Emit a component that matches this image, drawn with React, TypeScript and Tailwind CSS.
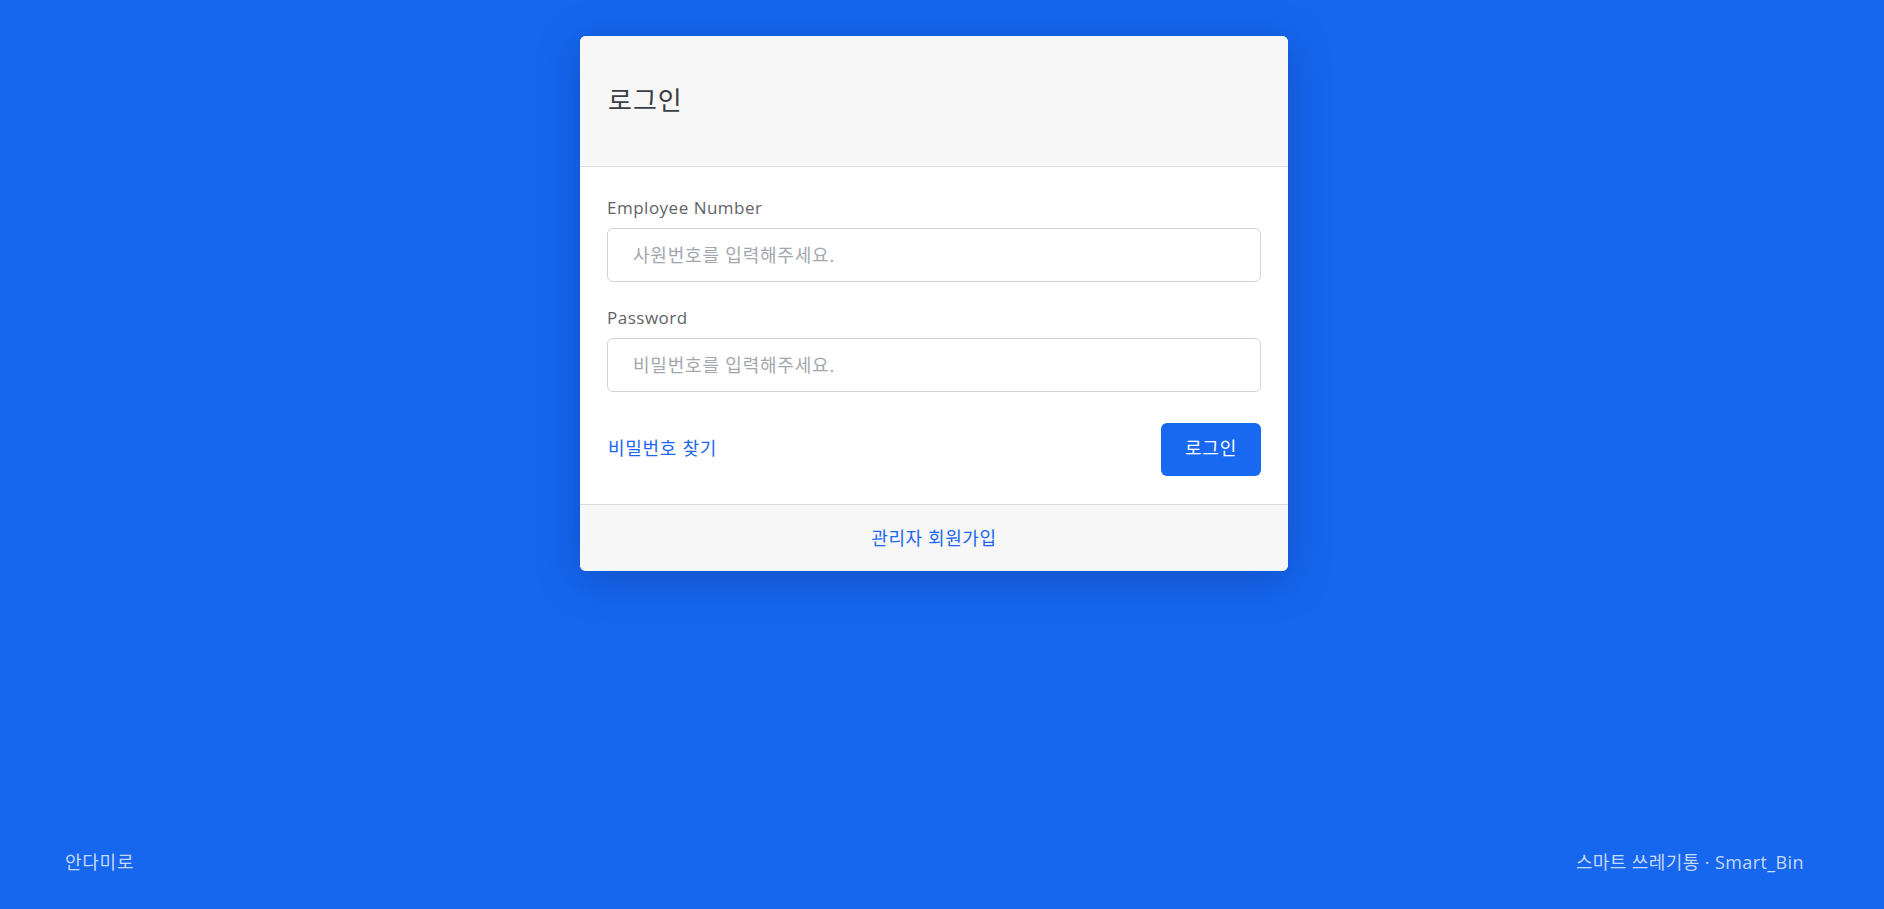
import React from "react";

const font = { fontFamily: '"Open Sans", "Noto Sans CJK KR", sans-serif' };

export default function App() {
  return (
    <div
      className="min-h-screen w-full bg-[#1666ee] flex flex-col"
      style={font}
    >
      <div className="flex justify-center pt-[36px] pr-[16px]">
        <div className="w-[708px] rounded-[6px] bg-white overflow-hidden shadow-[0_8px_40px_rgba(10,40,120,0.35)]">
          <div className="h-[131px] bg-[#f7f7f7] border-b border-[#dcdcdc] flex items-center px-[28px] pb-[3px]">
            <h1 className="text-[26px] tracking-[1px] font-normal text-[#3a3e44] leading-none">로그인</h1>
          </div>
          <div className="px-[27px] pt-[29px] pb-[28px]">
            <label className="block text-[17px] leading-[24px] text-[#5f6368] tracking-[0.5px] mb-[8px]">
              Employee Number
            </label>
            <input
              className="block w-full h-[54px] rounded-[6px] border border-[#cfd2d8] px-[25px] text-[18px] tracking-[0.8px] text-[#333] placeholder:text-[#a3a7ad] outline-none"
              placeholder="사원번호를 입력해주세요."
            />
            <label className="block mt-[24px] text-[17px] leading-[24px] text-[#5f6368] tracking-[0.5px] mb-[8px]">
              Password
            </label>
            <input
              type="password"
              className="block w-full h-[54px] rounded-[6px] border border-[#cfd2d8] px-[25px] text-[18px] tracking-[0.8px] text-[#333] placeholder:text-[#a3a7ad] outline-none"
              placeholder="비밀번호를 입력해주세요."
            />
            <div className="mt-[31px] flex items-center justify-between">
              <a className="text-[18px] tracking-[0.7px] text-[#1b67f2] pl-[1px] pb-[3px] cursor-pointer">비밀번호 찾기</a>
              <button className="w-[100px] h-[53px] rounded-[6px] bg-[#1868f0] text-white text-[18px] tracking-[0.7px] pb-[3px]">
                로그인
              </button>
            </div>
          </div>
          <div className="h-[67px] bg-[#f7f7f7] border-t border-[#dcdcdc] flex items-center justify-center">
            <a className="text-[18px] tracking-[0.6px] text-[#1b67f2] cursor-pointer">관리자 회원가입</a>
          </div>
        </div>
      </div>
      <div className="mt-auto flex justify-between pl-[65px] pr-[80px] pb-[33px] text-[18px] text-white/75">
        <span className="tracking-[0.75px]">안다미로</span>
        <span className="tracking-[0.4px]">스마트 쓰레기통 · Smart_Bin</span>
      </div>
    </div>
  );
}
